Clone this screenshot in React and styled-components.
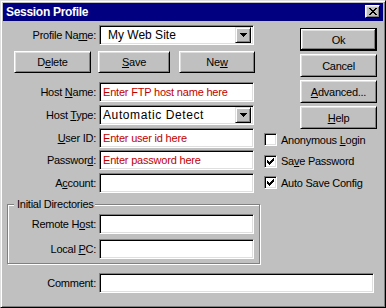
import React from 'react';
import styled, { createGlobalStyle } from 'styled-components';

const Global = createGlobalStyle`
  html, body { margin: 0; padding: 0; background: #c0c0c0; }
  body { font-family: "Liberation Sans", Arial, sans-serif; }
  *, *::before, *::after { box-sizing: border-box; }
`;

const Window = styled.div`
  width: 386px;
  height: 308px;
  background: #c0c0c0;
  border: 1px solid;
  border-color: #dfdfdf #000 #000 #dfdfdf;
  box-shadow: inset 1px 1px #fff, inset -1px -1px #808080;
  padding: 2px;
  display: flex;
  flex-direction: column;
  font-family: "Liberation Sans", Arial, sans-serif;
  font-size: 11px;
  letter-spacing: -0.25px;
  color: #000;
`;

const TitleBar = styled.div`
  height: 18px;
  flex: none;
  background: #000080;
  display: flex;
  align-items: flex-start;
  justify-content: space-between;
  padding: 0 3px 0 3px;
`;

const TitleText = styled.div`
  color: #fff;
  font-weight: bold;
  font-size: 12px;
  letter-spacing: -0.3px;
  line-height: 18px;
`;

const CloseButton = styled.div`
  margin-top: 2px;
  width: 15px;
  height: 13px;
  background: #c0c0c0;
  border: 1px solid;
  border-color: #fff #000 #000 #fff;
  box-shadow: inset 1px 1px #dfdfdf, inset -1px -1px #808080;
  display: flex;
  align-items: center;
  justify-content: center;
`;

const Body = styled.div`
  display: flex;
  flex: none;
`;

const LeftCol = styled.div`
  width: 261px;
  padding: 4px 4px 0 4px;
  display: flex;
  flex-direction: column;
`;

const RightCol = styled.div`
  flex: 1;
  padding-top: 7px;
  display: flex;
  flex-direction: column;
`;

const Row = styled.div`
  display: flex;
  align-items: center;
  height: 20px;
  gap: 3px;
`;

const Label = styled.div`
  width: ${(p) => p.$w || 89}px;
  flex: none;
  text-align: right;
  white-space: nowrap;
  u { text-underline-offset: 1px; }
`;

const Field = styled.div`
  width: ${(p) => p.$w || 155}px;
  height: 20px;
  flex: none;
  background: #fff;
  border: 1px solid;
  border-color: #808080 #fff #fff #808080;
  box-shadow: inset 1px 1px #000, inset -1px -1px #dfdfdf;
  padding: 2px 2px 2px 2px;
  display: flex;
  align-items: center;
  color: #c00000;
  font-size: 11px;
  letter-spacing: -0.2px;
  white-space: nowrap;
  overflow: hidden;
`;

const FieldText = styled.span`
  padding-left: 1px;
`;

const ComboText = styled.span`
  flex: 1;
  color: #000;
  font-size: 12px;
  letter-spacing: ${(p) => p.$ls || 0}px;
  padding-left: ${(p) => p.$pl || 1}px;
  overflow: hidden;
`;

const DropButton = styled.div`
  width: 16px;
  height: 16px;
  flex: none;
  background: #c0c0c0;
  border: 1px solid;
  border-color: #dfdfdf #000 #000 #dfdfdf;
  box-shadow: inset 1px 1px #fff, inset -1px -1px #808080;
  display: flex;
  align-items: center;
  justify-content: center;
`;

const ButtonRow = styled.div`
  display: flex;
  margin-top: 6px;
  padding-left: 7px;
`;

const Button = styled.button`
  width: ${(p) => p.$w || 77}px;
  height: ${(p) => p.$h || 22}px;
  margin-left: ${(p) => p.$ml || 0}px;
  flex: none;
  padding: 0;
  background: #c0c0c0;
  color: #000;
  font-family: inherit;
  font-size: 11px;
  letter-spacing: -0.25px;
  border: 1px solid;
  border-color: ${(p) => (p.$default ? '#000' : '#fff #000 #000 #fff')};
  box-shadow: ${(p) =>
    p.$default
      ? 'inset -1px -1px #000, inset 1px 1px #fff, inset -2px -2px #808080, inset 2px 2px #dfdfdf'
      : 'inset 1px 1px #dfdfdf, inset -1px -1px #808080'};
  display: flex;
  align-items: center;
  justify-content: center;
  u { text-underline-offset: 1px; }
`;

const FieldRows = styled.div`
  display: flex;
  flex-direction: column;
  gap: 2.75px;
  margin-top: 9px;
`;

const Group = styled.div`
  position: relative;
  margin-top: 11px;
  width: 253px;
  height: 60px;
  border: 1px solid #808080;
  box-shadow: inset 1px 1px #fff, 1px 1px #fff;
  padding-top: 9px;
  display: flex;
  flex-direction: column;
  gap: 5px;
`;

const Legend = styled.div`
  position: absolute;
  top: -7px;
  left: 6px;
  padding: 0 1px 0 3px;
  line-height: 13px;
  background: #c0c0c0;
  white-space: nowrap;
`;

const SideButtons = styled.div`
  margin-left: 36px;
  display: flex;
  flex-direction: column;
  gap: 3px;
`;

const Checks = styled.div`
  margin-top: 4px;
  display: flex;
  flex-direction: column;
  gap: 8.5px;
`;

const CheckRow = styled.div`
  display: flex;
  align-items: center;
  height: 13px;
  gap: 4px;
  white-space: nowrap;
  u { text-underline-offset: 1px; }
`;

const CheckBox = styled.div`
  width: 13px;
  height: 13px;
  flex: none;
  background: #fff;
  border: 1px solid;
  border-color: #808080 #fff #fff #808080;
  box-shadow: inset 1px 1px #000, inset -1px -1px #dfdfdf;
  padding: 2px;
  display: flex;
  align-items: center;
  justify-content: center;
`;

const CommentRow = styled(Row)`
  margin-top: 9px;
  padding-left: 4px;
`;

const Check = () => (
  <svg width="7" height="7" viewBox="0 0 7 7" shapeRendering="crispEdges">
    <path
      fill="#000"
      d="M6 0h1v1h-1z M5 1h2v1h-2z M0 2h1v1h-1z M4 2h3v1h-3z M0 3h2v1h-2z M3 3h3v1h-3z M0 4h5v1h-5z M1 5h3v1h-3z M2 6h1v1h-1z"
    />
  </svg>
);

const CloseX = () => (
  <svg width="8" height="7" viewBox="0 0 8 7" shapeRendering="crispEdges">
    <path
      fill="#000"
      d="M0 0h2v1h-2z M6 0h2v1h-2z M1 1h2v1h-2z M5 1h2v1h-2z M2 2h4v1h-4z M3 3h2v1h-2z M2 4h4v1h-4z M1 5h2v1h-2z M5 5h2v1h-2z M0 6h2v1h-2z M6 6h2v1h-2z"
    />
  </svg>
);

const Triangle = () => (
  <svg width="7" height="4" viewBox="0 0 7 4" shapeRendering="crispEdges">
    <path fill="#000" d="M0 0h7v1h-7z M1 1h5v1h-5z M2 2h3v1h-3z M3 3h1v1h-1z" />
  </svg>
);

const Combo = ({ value, ls, pl }) => (
  <Field>
    <ComboText $ls={ls} $pl={pl}>{value}</ComboText>
    <DropButton>
      <Triangle />
    </DropButton>
  </Field>
);

export default function App() {
  return (
    <>
      <Global />
      <Window>
        <TitleBar>
          <TitleText>Session Profile</TitleText>
          <CloseButton>
            <CloseX />
          </CloseButton>
        </TitleBar>
        <Body>
          <LeftCol>
            <Row>
              <Label>Profile Na<u>m</u>e:</Label>
              <Combo value="My Web Site" pl={6} />
            </Row>
            <ButtonRow>
              <Button $w={77}>D<u>e</u>lete</Button>
              <Button $w={72} $ml={7}><u>S</u>ave</Button>
              <Button $w={76} $ml={9}>Ne<u>w</u></Button>
            </ButtonRow>
            <FieldRows>
              <Row>
                <Label>Host <u>N</u>ame:</Label>
                <Field><FieldText>Enter FTP host name here</FieldText></Field>
              </Row>
              <Row>
                <Label>Host <u>T</u>ype:</Label>
                <Combo value="Automatic Detect" ls={0.6} pl={1} />
              </Row>
              <Row>
                <Label><u>U</u>ser ID:</Label>
                <Field><FieldText>Enter user id here</FieldText></Field>
              </Row>
              <Row>
                <Label>Passwor<u>d</u>:</Label>
                <Field><FieldText>Enter password here</FieldText></Field>
              </Row>
              <Row>
                <Label>A<u>c</u>count:</Label>
                <Field />
              </Row>
            </FieldRows>
            <Group>
              <Legend>Initial Directories</Legend>
              <Row>
                <Label $w={88}>Remote H<u>o</u>st:</Label>
                <Field />
              </Row>
              <Row>
                <Label $w={88}>Local <u>P</u>C:</Label>
                <Field />
              </Row>
            </Group>
          </LeftCol>
          <RightCol>
            <SideButtons>
              <Button $h={23} $default>Ok</Button>
              <Button $h={23}>Cancel</Button>
              <Button $h={23}><u>A</u>dvanced...</Button>
              <Button $h={23}><u>H</u>elp</Button>
            </SideButtons>
            <Checks>
              <CheckRow>
                <CheckBox />
                <span>Anonymous <u>L</u>ogin</span>
              </CheckRow>
              <CheckRow>
                <CheckBox><Check /></CheckBox>
                <span>Sa<u>v</u>e Password</span>
              </CheckRow>
              <CheckRow>
                <CheckBox><Check /></CheckBox>
                <span>Auto Save Config</span>
              </CheckRow>
            </Checks>
          </RightCol>
        </Body>
        <CommentRow>
          <Label>Comment:</Label>
          <Field $w={275} />
        </CommentRow>
      </Window>
    </>
  );
}
